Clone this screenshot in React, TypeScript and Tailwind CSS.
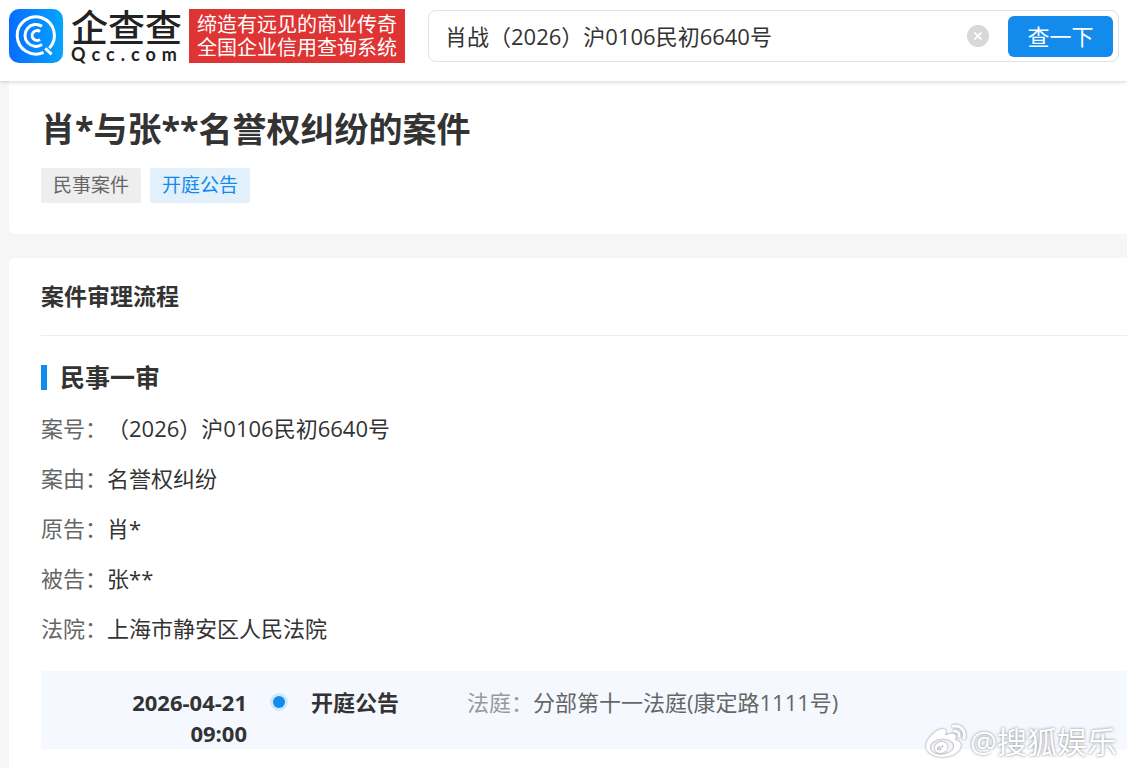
import { useState } from 'react'
import { FaWeibo } from 'react-icons/fa'

const CASE_FIELDS = [
  { label: '案号：', value: '（2026）沪0106民初6640号' },
  { label: '案由：', value: '名誉权纠纷' },
  { label: '原告：', value: '肖*' },
  { label: '被告：', value: '张**' },
  { label: '法院：', value: '上海市静安区人民法院' },
]

function LogoMark() {
  return (
    <svg viewBox="0 0 54 54" className="size-[54px] shrink-0" fill="none" aria-hidden="true">
      <defs>
        <linearGradient id="logo-bg" x1="0" y1="0" x2="1" y2="0">
          <stop offset="0" stopColor="#0a6cff" />
          <stop offset="1" stopColor="#03a5ff" />
        </linearGradient>
      </defs>
      <rect width="54" height="54" rx="10" fill="url(#logo-bg)" />
      <g stroke="#fff" strokeWidth="3">
        <path d="M40.3 39.2 A18.6 18.6 0 1 0 34.6 43.3" />
        <path d="M36.3 39.3 L42.6 45.3" />
        <path d="M33 17.2 A11 11 0 1 0 33 35.6" />
        <path d="M31 22.6 A4.9 4.9 0 1 0 31 30.4" />
      </g>
    </svg>
  )
}

function Header() {
  const [keyword, setKeyword] = useState('肖战（2026）沪0106民初6640号')

  return (
    <header className="relative flex items-center bg-white pt-[9px] pr-2 pb-[18px] pl-[9px] shadow-[0_1px_4px_rgba(0,0,0,0.18)]">
      <a href="#" className="flex shrink-0 items-center">
        <LogoMark />
        <span className="ml-2 flex w-[110px] flex-col whitespace-nowrap text-[#222]">
          <span className="text-[37px] leading-9 font-medium">企查查</span>
          <span className="font-[Lato] text-[18px] leading-4 font-bold tracking-[6px]">
            Qcc.com
          </span>
        </span>
      </a>
      <p className="ml-2 h-[54px] w-[216px] shrink-0 bg-[#de3434] pt-1 text-center text-xl leading-[23px] text-white">
        缔造有远见的商业传奇
        <br />
        全国企业信用查询系统
      </p>
      <form
        className="ml-[23px] flex h-[52px] min-w-0 flex-1 items-center rounded-lg border border-[#e3e3e3] pr-[5px] pl-4"
        onSubmit={(e) => e.preventDefault()}
      >
        <input
          type="text"
          aria-label="搜索"
          value={keyword}
          onChange={(e) => setKeyword(e.target.value)}
          className="min-w-0 flex-1 text-[22px] leading-8 text-[#333] outline-none"
        />
        <button
          type="button"
          aria-label="清空"
          onClick={() => setKeyword('')}
          className="mr-[19px] flex size-[22px] items-center justify-center rounded-full bg-[#d8d8d8]"
        >
          <svg viewBox="0 0 8 8" className="size-2" stroke="#fff" strokeWidth="1.6" aria-hidden="true">
            <path d="M0.5 0.5 L7.5 7.5 M7.5 0.5 L0.5 7.5" />
          </svg>
        </button>
        <button
          type="submit"
          className="h-[41px] w-[105px] rounded-md bg-[#128bed] text-[22px] leading-8 text-white"
        >
          查一下
        </button>
      </form>
    </header>
  )
}

function Timeline() {
  return (
    <div className="mt-[18px] flex bg-[#f5f9ff] pt-4 text-[22px] leading-[31px]">
      <time className="w-[206px] text-right font-bold">
        2026-04-21
        <br />
        09:00
      </time>
      <span className="mt-[6px] ml-[23px] flex size-[18px] items-center justify-center rounded-full bg-[#d0e8fb]">
        <span className="size-3 rounded-full bg-[#128bed]" />
      </span>
      <strong className="ml-[23px] w-[156px]">开庭公告</strong>
      <p className="text-[#666]">
        <span className="text-[#999]">法庭：</span>
        分部第十一法庭(康定路1111号)
      </p>
    </div>
  )
}

export default function App() {
  return (
    <div
      lang="zh-CN"
      className="relative flex min-h-screen flex-col bg-[#f6f6f6] font-['Open_Sans','Noto_Sans_CJK_SC',sans-serif] text-[#333]"
    >
      <Header />

      <main className="flex flex-1 flex-col gap-6 pl-[9px]">
        <section className="rounded-bl-md bg-white pt-6 pb-[31px] pl-8">
          <h1 className="text-[34px] leading-[48px] font-bold">肖*与张**名誉权纠纷的案件</h1>
          <div className="mt-[15px] flex gap-[9px] text-[19px] leading-[35px]">
            <span className="rounded-xs bg-[#eee] px-3 text-[#666]">民事案件</span>
            <span className="rounded-xs bg-[#e2f0fc] px-3 text-[#128bed]">开庭公告</span>
          </div>
        </section>

        <section className="flex-1 rounded-tl-md bg-white pl-8">
          <h2 className="border-b border-[#eee] py-[22px] text-[23px] leading-[33px] font-bold">
            案件审理流程
          </h2>
          <h3 className="mt-[23px] flex items-center text-[25px] leading-9 font-bold">
            <span className="mr-[13px] h-[25px] w-[6px] bg-[#128bed]" />
            民事一审
          </h3>
          <dl className="mt-2 text-[22px]">
            {CASE_FIELDS.map((field) => (
              <div key={field.label} className="flex leading-[50px]">
                <dt className="text-[#666]">{field.label}</dt>
                <dd>{field.value}</dd>
              </div>
            ))}
          </dl>
          <Timeline />
        </section>
      </main>

      <div className="absolute right-[10px] bottom-1 flex items-center gap-1 text-[30px] leading-[44px] text-white [text-shadow:0_0_3px_rgba(0,0,0,0.5)]">
        <FaWeibo className="size-10 drop-shadow-[0_0_1px_rgba(0,0,0,0.5)]" />
        @搜狐娱乐
      </div>
    </div>
  )
}
